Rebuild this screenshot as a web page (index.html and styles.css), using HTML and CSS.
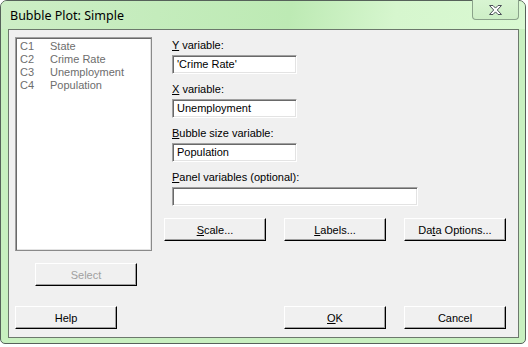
FILE: index.html
```html
<!DOCTYPE html>
<html lang="en">
<head>
    <meta charset="UTF-8">
    <title>Bubble Plot: Simple</title>
    <link rel="stylesheet" href="styles.css">
</head>
<body>
    <div class="window">
        <!-- Title bar -->
        <div class="titlebar">
            <span class="title">Bubble Plot: Simple</span>
            <button class="close-btn" title="Close">
                <svg width="15" height="12" viewBox="0 0 15 12">
                    <path d="M1.5 1.5h3.5l2.5 2.6 2.5-2.6h3.5l-4.2 4.5 4.2 4.5h-3.5l-2.5-2.6-2.5 2.6h-3.5l4.2-4.5z" fill="#fff" stroke="#4b4f58" stroke-width="1" stroke-linejoin="round"/>
                </svg>
            </button>
        </div>

        <div class="client">
            <div class="main">
                <div class="left">
                    <div class="varlist">
                        <div class="var"><span class="col">C1</span><span>State</span></div>
                        <div class="var"><span class="col">C2</span><span>Crime Rate</span></div>
                        <div class="var"><span class="col">C3</span><span>Unemployment</span></div>
                        <div class="var"><span class="col">C4</span><span>Population</span></div>
                    </div>
                    <button class="btn btn-select" disabled>Select</button>
                </div>

                <div class="right">
                    <div class="fields">
                        <div class="field">
                            <label><u>Y</u> variable:</label>
                            <div class="textbox">'Crime Rate'</div>
                        </div>
                        <div class="field">
                            <label><u>X</u> variable:</label>
                            <div class="textbox">Unemployment</div>
                        </div>
                        <div class="field">
                            <label><u>B</u>ubble size variable:</label>
                            <div class="textbox">Population</div>
                        </div>
                        <div class="field">
                            <label><u>P</u>anel variables (optional):</label>
                            <div class="textbox wide"></div>
                        </div>
                    </div>
                    <div class="actions">
                        <button class="btn"><u>S</u>cale...</button>
                        <button class="btn"><u>L</u>abels...</button>
                        <button class="btn">Da<u>t</u>a Options...</button>
                    </div>
                </div>
            </div>

            <div class="footer">
                <button class="btn">Help</button>
                <div class="footer-right">
                    <button class="btn"><u>O</u>K</button>
                    <button class="btn">Cancel</button>
                </div>
            </div>
        </div>
    </div>
</body>
</html>
```

FILE: styles.css
```css
/* General */
* {
    margin: 0;
    padding: 0;
    box-sizing: border-box;
}

body {
    background: #ffffff;
    font-family: 'Liberation Sans', Arial, sans-serif;
    font-size: 11px;
    color: #000;
}

/* Window frame */
.window {
    width: 526px;
    height: 344px;
    border: 1px solid #56625a;
    border-radius: 7px 7px 5px 5px;
    background: #c8f0c0;
    padding: 0 6px 5px 7px;
    display: flex;
    flex-direction: column;
}

.titlebar {
    height: 28px;
    display: flex;
    justify-content: space-between;
    align-items: flex-start;
    margin: 0 -6px 0 -7px;
    padding: 0 6px 0 9px;
    border-radius: 6px 6px 0 0;
    background: linear-gradient(100deg, #cdeec6 0%, #c4ecbc 30%, #bdeab4 55%, #d6f6ce 75%, #d9f9d2 100%);
}

.title {
    font-family: 'Noto Sans', 'Open Sans', sans-serif;
    line-height: 30px;
    font-size: 12.5px;
    color: #000;
}

.close-btn {
    width: 47px;
    height: 20px;
    margin-top: -1px;
    border: 1px solid #8aa28a;
    border-top: none;
    border-radius: 0 0 4px 4px;
    background: linear-gradient(to bottom, #d8f4d2, #cdefc6);
    display: flex;
    align-items: center;
    justify-content: center;
    padding-top: 1px;
}

/* Client area */
.client {
    flex: 1;
    background: #f0f0f0;
    border: 1px solid #6c786c;
    padding: 7px 12px 0 6px;
}

.main {
    display: flex;
}

.left {
    width: 138px;
}

.varlist {
    height: 214px;
    background: #fff;
    border: 1px solid #a0a0a0;
    border-right-color: #8a8a8a;
    border-bottom-color: #8a8a8a;
    box-shadow: inset 1px 1px 0 #696969, inset -1px -1px 0 #e3e3e3;
    padding: 2px 4px;
    color: #6d6d6d;
}

.var {
    display: flex;
    height: 13px;
    line-height: 13px;
}

.var .col {
    width: 30px;
}

.right {
    margin-left: 12px;
    flex: 1;
}

.fields {
    padding-left: 8px;
    margin-top: 1px;
}

.field {
    margin-bottom: 8px;
}

.field label {
    display: block;
    height: 15px;
    line-height: 15px;
    margin-bottom: 2px;
}

.textbox {
    width: 125px;
    height: 19px;
    background: #fff;
    border: 1px solid;
    border-color: #a0a0a0 #fff #fff #a0a0a0;
    box-shadow: inset 1px 1px 0 #696969, inset -1px -1px 0 #e3e3e3;
    padding-left: 4px;
    line-height: 17px;
    white-space: nowrap;
}

.textbox.wide {
    width: 246px;
}

/* Buttons */
.btn {
    width: 102px;
    height: 23px;
    background: #f0f0f0;
    border: 1px solid;
    border-color: #fff #000 #000 #fff;
    box-shadow: inset -1px -1px 0 #a0a0a0;
    font-family: inherit;
    font-size: 11px;
    color: #000;
}

.btn-select {
    margin-top: 12px;
    margin-left: 20px;
    color: #a0a0a0;
}

.actions {
    display: flex;
    gap: 18px;
    margin-top: 12px;
}

.footer {
    display: flex;
    justify-content: space-between;
    margin-top: 20px;
}

.footer-right {
    display: flex;
    gap: 18px;
}
```
